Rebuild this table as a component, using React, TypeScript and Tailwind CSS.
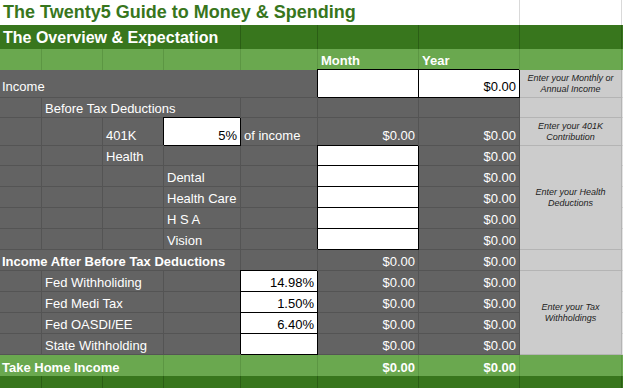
import React from 'react'

type P = { className?: string; children?: React.ReactNode }

// generic spreadsheet cell, text sits at the bottom like in a sheet
function C({ className = '', children }: P) {
  return (
    <div className={`flex items-end px-[3px] leading-[15px] whitespace-nowrap min-w-0 ${className}`}>
      {children}
    </div>
  )
}

const gray = 'bg-[#636363] border-r border-b border-[#545454] text-white pb-[1px]'
const grayNoR = 'bg-[#636363] border-b border-[#545454] text-white'
const input = 'bg-white border-r border-b border-black shadow-[-1px_-1px_0_0_#000] text-black justify-end pb-[1px]'
const note = 'bg-[#cccccc] border-r border-b border-[#b4b4b4]'
const dark = 'bg-[#38761d] border-r border-[#2b5e15]'
const light = 'bg-[#6aa84f] border-r border-[#5c9643] text-white pb-[2px]'
const edge = 'bg-[#e3e3e3] border-b border-[#cfcfcf]'

function Note({ className = '', children }: P) {
  return (
    <div
      className={`${note} flex items-center justify-center text-center italic text-[9px] leading-[11px] text-[#222] ${className}`}
    >
      <span>{children}</span>
    </div>
  )
}

const money = '$0.00'

export default function App() {
  return (
    <div className="w-[623px] h-[388px] overflow-hidden bg-white font-['Liberation_Sans',Arial,sans-serif] text-[13px]">
      <div className="grid grid-cols-[42px_61px_61px_77px_77px_101px_101px_102px_1px] grid-rows-[25px_24px_21px_28px_20px_28px_20px_21px_21px_21px_21px_21px_21px_21px_21px_21px_21px_12px]">
        {/* title */}
        <C className="col-span-7 bg-white border-r border-[#d9d9d9] text-[18px] font-bold text-[#38761d] leading-[21px] pb-[2px]">
          The Twenty5 Guide to Money &amp; Spending
        </C>
        <C className="bg-white border-r border-[#d9d9d9]" />
        <C className="bg-white" />

        {/* overview */}
        <C className={`col-span-4 ${dark} text-[16px] font-bold text-white leading-[18px] pb-[2px]`}>
          The Overview &amp; Expectation
        </C>
        <C className={dark} />
        <C className={dark} />
        <C className={dark} />
        <C className={dark} />
        <C className="bg-[#38761d]" />

        {/* month / year */}
        <C className={light} />
        <C className={light} />
        <C className={light} />
        <C className={light} />
        <C className={light} />
        <C className={`${light} font-bold`}>Month</C>
        <C className={`${light} font-bold`}>Year</C>
        <C className={light} />
        <C className="bg-[#6aa84f]" />

        {/* income */}
        <C className={`col-span-5 ${grayNoR} pb-[3px] pl-[2px]`}>Income</C>
        <C className={input} />
        <C className={`${input} !pb-[3px]`}>{money}</C>
        <Note>
          Enter your Monthly or
          <br />
          Annual Income
        </Note>
        <C className={edge} />

        {/* before tax */}
        <C className={gray} />
        <C className={`col-span-3 ${gray}`}>Before Tax Deductions</C>
        <C className={gray} />
        <C className={gray} />
        <C className={gray} />
        <Note />
        <C className={edge} />

        {/* 401k */}
        <C className={gray} />
        <C className={gray} />
        <C className={`${gray} !pb-[2px]`}>401K</C>
        <C className={`${input} !pb-[2px]`}>5%</C>
        <C className={`${gray} !pb-[2px]`}>of income</C>
        <C className={`${gray} justify-end !pb-[2px]`}>{money}</C>
        <C className={`${gray} justify-end !pb-[2px]`}>{money}</C>
        <Note>
          Enter your 401K
          <br />
          Contribution
        </Note>
        <C className={edge} />

        {/* health */}
        <C className={gray} />
        <C className={gray} />
        <C className={gray}>Health</C>
        <C className={gray} />
        <C className={gray} />
        <C className={input} />
        <C className={`${gray} justify-end`}>{money}</C>
        <Note className="row-span-5">
          Enter your Health
          <br />
          Deductions
        </Note>
        <C className={edge} />

        {['Dental', 'Health Care', 'H S A', 'Vision'].map((label) => (
          <React.Fragment key={label}>
            <C className={gray} />
            <C className={gray} />
            <C className={gray} />
            <C className={gray}>{label}</C>
            <C className={gray} />
            <C className={input} />
            <C className={`${gray} justify-end`}>{money}</C>
            <C className={edge} />
          </React.Fragment>
        ))}

        {/* income after */}
        <C className={`col-span-4 ${gray} font-bold pl-[2px]`}>Income After Before Tax Deductions</C>
        <C className={gray} />
        <C className={`${gray} justify-end`}>{money}</C>
        <C className={`${gray} justify-end`}>{money}</C>
        <Note />
        <C className={edge} />

        {/* taxes */}
        {[
          ['Fed Withholiding', '14.98%'],
          ['Fed Medi Tax', '1.50%'],
          ['Fed OASDI/EE', '6.40%'],
          ['State Withholding', ''],
        ].map(([label, pct], i) => (
          <React.Fragment key={label}>
            <C className={gray} />
            <C className={`col-span-2 ${gray}`}>{label}</C>
            <C className={gray} />
            <C className={input}>{pct}</C>
            <C className={`${gray} justify-end`}>{money}</C>
            <C className={`${gray} justify-end`}>{money}</C>
            {i === 0 && (
              <Note className="row-span-4">
                Enter your Tax
                <br />
                Withholdings
              </Note>
            )}
            <C className={edge} />
          </React.Fragment>
        ))}

        {/* take home */}
        <C className={`col-span-3 ${light} font-bold !pb-[1px] pl-[2px]`}>Take Home Income</C>
        <C className={light} />
        <C className={light} />
        <C className={`${light} justify-end font-bold !pb-[1px]`}>{money}</C>
        <C className={`${light} justify-end font-bold !pb-[1px]`}>{money}</C>
        <C className={light} />
        <C className="bg-[#6aa84f]" />

        {/* footer band */}
        <C className={dark} />
        <C className={dark} />
        <C className={dark} />
        <C className={dark} />
        <C className={dark} />
        <C className={dark} />
        <C className={dark} />
        <C className={dark} />
        <C className="bg-[#38761d]" />
      </div>
    </div>
  )
}
